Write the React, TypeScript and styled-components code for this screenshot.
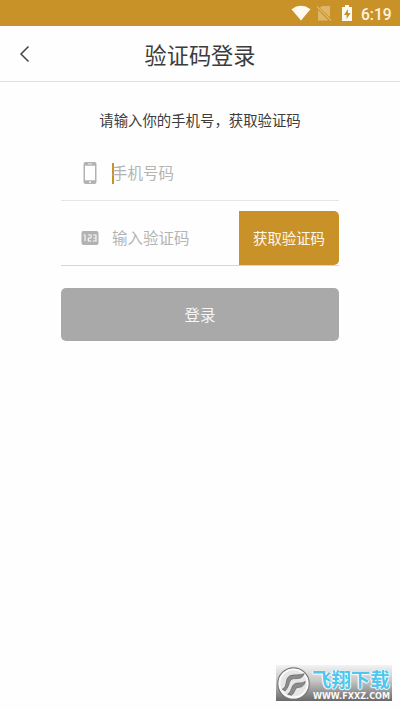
import React from 'react';
import styled, { createGlobalStyle } from 'styled-components';

const GlobalStyle = createGlobalStyle`
  * { box-sizing: border-box; }
  body { margin: 0; background: #fff; }
  button { font: inherit; border: 0; padding: 0; }
`;

const Screen = styled.div`
  display: flex;
  flex-direction: column;
  height: 710px;
  overflow: hidden;
  background: #fefefe;
  color: #3c3c3c;
  font-family: 'Noto Sans CJK SC', sans-serif;
`;

const StatusBar = styled.div`
  display: flex;
  flex: none;
  align-items: center;
  justify-content: flex-end;
  height: 26px;
  padding-right: 9px;
  background: #c99229;
`;

const StatusIcons = styled.svg`
  width: 66px;
  height: 26px;
  margin-right: 4px;
`;

const Clock = styled.span`
  width: 30px;
  padding-top: 3px;
  color: #fff5df;
  font: 500 15.6px/24px Roboto, sans-serif;
  white-space: nowrap;
`;

const Header = styled.header`
  display: grid;
  flex: none;
  grid-template-columns: 50px 1fr 50px;
  align-items: center;
  height: 56px;
  border-bottom: 1px solid #e0e0e0;
`;

const BackButton = styled.button`
  display: flex;
  justify-content: center;
  padding-top: 1px;
  background: none;
`;

const Title = styled.h1`
  margin: 0;
  font-size: 22.2px;
  font-weight: 400;
  line-height: 32px;
  text-align: center;
`;

const Form = styled.main`
  display: flex;
  flex-direction: column;
  width: 278px;
  margin-left: 61px;
`;

const Hint = styled.p`
  margin: 27px 0 0;
  font-size: 14.4px;
  line-height: 22px;
  text-align: center;
`;

const Field = styled.div<{ $height: number; $line: string }>`
  display: flex;
  align-items: flex-end;
  height: ${(p) => p.$height}px;
  border-bottom: 1px solid ${(p) => p.$line};
`;

const Entry = styled.div`
  display: flex;
  flex: 1;
  align-items: center;
  height: 54px;
`;

const FieldIcon = styled.svg`
  width: 18px;
  height: 22px;
  margin-left: 20px;
  fill: #b2b2b2;
`;

const Caret = styled.span<{ $active?: boolean }>`
  width: 2px;
  height: 21px;
  margin-left: 13px;
  margin-right: -2px;
  background: ${(p) => (p.$active ? '#c99229' : 'transparent')};
`;

const Placeholder = styled.span`
  padding-bottom: 2px;
  color: #b4b4b4;
  font-size: 15.5px;
  line-height: 24px;
`;

const CodeButton = styled.button`
  width: 100px;
  height: 54px;
  padding-bottom: 1px;
  border-radius: 0 5px 5px 0;
  background: #c99229;
  color: #fff8e8;
  font-size: 14.4px;
`;

const LoginButton = styled.button`
  height: 53px;
  margin-top: 22px;
  padding-bottom: 2px;
  border-radius: 5px;
  background: #a9a9a9;
  color: #f5f5f5;
  font-size: 15.5px;
`;

const Watermark = styled.footer`
  display: flex;
  align-items: center;
  width: 116px;
  height: 36px;
  margin: auto 8px 9px auto;
  background: linear-gradient(#f3f3f3, #c4c4c4 45%, #696969);
`;

const Emblem = styled.svg`
  flex: none;
  width: 36px;
  height: 36px;
`;

const Brand = styled.div`
  display: flex;
  flex-direction: column;
  width: 80px;
  height: 37px;
`;

const BrandName = styled.span`
  height: 27px;
  color: #4fc6ee;
  font-size: 19.4px;
  font-weight: 700;
  line-height: 27px;
  white-space: nowrap;
  text-shadow: 0 0 1px #fff, 1px 0 1px #fff, -1px 0 1px #fff, 0 1px 1px #fff;
`;

const BrandUrl = styled.svg`
  width: 80px;
  height: 10px;
  overflow: visible;
`;

export default function App() {
  return (
    <>
      <GlobalStyle />
      <Screen>
        <StatusBar>
          <StatusIcons viewBox="0 0 66 26">
            <path d="M.5 9.2Q10 2.5 19.5 9.2L10 20.5Z" fill="#fffaf0" />
            <path d="M31 6h8v11.2L28.8 7.8ZM27 10l10.5 10.5H27Z" fill="#dfb669" />
            <path d="m26 6.5 14 14" stroke="#dfb669" strokeWidth="1.2" />
            <path d="M51 7h3V5h4v2h3v14H51Z" fill="#fffaf0" />
            <path d="m57 9-4 6h2.6v4l4-6H57Z" fill="#c99229" />
          </StatusIcons>
          <Clock>6:19</Clock>
        </StatusBar>
        <Header>
          <BackButton aria-label="返回">
            <svg width="12" height="18" viewBox="0 0 12 18" fill="none" stroke="#444" strokeWidth="1.5">
              <path d="M9.5 1.5 2 9l7.5 7.5" />
            </svg>
          </BackButton>
          <Title>验证码登录</Title>
        </Header>
        <Form>
          <Hint>请输入你的手机号，获取验证码</Hint>
          <Field $height={70} $line="#e6e6e6">
            <Entry>
              <FieldIcon viewBox="0 0 18 22">
                <path
                  fillRule="evenodd"
                  d="M4.5 0h9A2 2 0 0 1 15.5 2v18a2 2 0 0 1-2 2h-9a2 2 0 0 1-2-2V2a2 2 0 0 1 2-2ZM4 3.7v14.5h10V3.7ZM7 1.5v.8h4v-.8ZM8 19.5v1.2h2v-1.2Z"
                />
              </FieldIcon>
              <Caret $active />
              <Placeholder>手机号码</Placeholder>
            </Entry>
          </Field>
          <Field $height={65} $line="#d6d6d6">
            <Entry>
              <FieldIcon viewBox="0 0 18 22">
                <rect x="0.5" y="4" width="17" height="14" rx="2" />
                <path
                  d="M2.5 8H4v6M6.8 8H10v3H7.3v3h3.2M12 8h3v6h-3M12.5 11H15"
                  fill="none"
                  stroke="#f7f7f7"
                  strokeWidth="1.2"
                />
              </FieldIcon>
              <Caret />
              <Placeholder>输入验证码</Placeholder>
            </Entry>
            <CodeButton>获取验证码</CodeButton>
          </Field>
          <LoginButton>登录</LoginButton>
        </Form>
        <Watermark>
          <Emblem viewBox="0 0 36 37">
            <circle cx="17.5" cy="19" r="16" fill="#e6e6e6" stroke="#777" strokeWidth="1.5" />
            <circle cx="17.5" cy="19" r="14.5" fill="none" stroke="#fafafa" strokeWidth="2" />
            <path
              d="M6 25C12 22 8 14 14 11c4-1.5 9 0 14.5-2-2 5-6 5-10 5-7 0-4 7-9.5 12.5Z"
              fill="#8c8c8c"
              stroke="#666"
              strokeWidth=".8"
            />
            <path
              d="M11.5 30c5-3 3-9 8-11 3-1.2 6 .5 10-2-1 4.5-4 6-7 6-4 0-3 5-7 8Z"
              fill="#8c8c8c"
              stroke="#666"
              strokeWidth=".8"
            />
          </Emblem>
          <Brand>
            <BrandName>飞翔下载</BrandName>
            <BrandUrl>
              <text
                x="1"
                y="7"
                textLength="77"
                lengthAdjust="spacingAndGlyphs"
                fill="#fafafa"
                fontFamily="DejaVu Sans"
                fontWeight="700"
                fontSize="8"
              >
                WWW.FXXZ.COM
              </text>
            </BrandUrl>
          </Brand>
        </Watermark>
      </Screen>
    </>
  );
}
